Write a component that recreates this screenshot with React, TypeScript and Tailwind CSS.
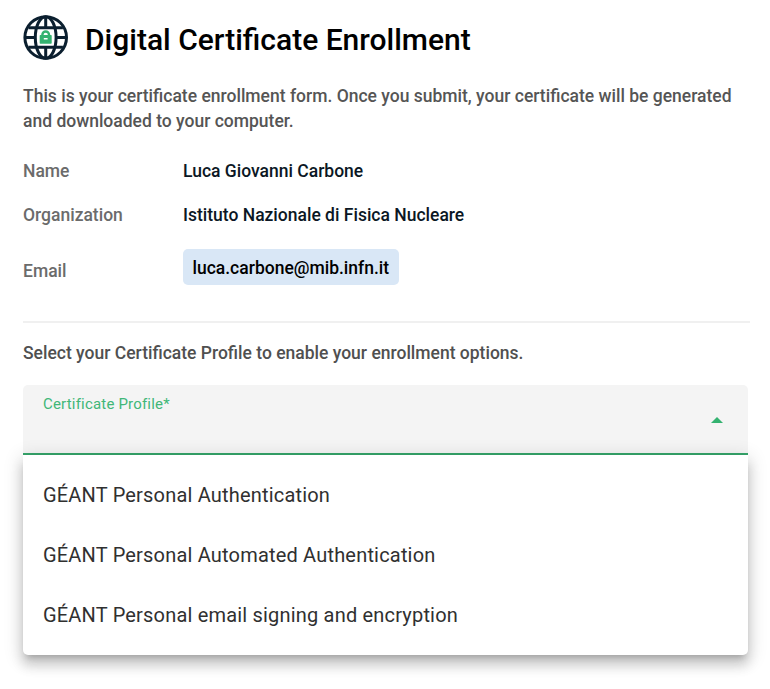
const details = [
  { label: 'Name', value: 'Luca Giovanni Carbone' },
  { label: 'Organization', value: 'Istituto Nazionale di Fisica Nucleare' },
];

const profiles = [
  'GÉANT Personal Authentication',
  'GÉANT Personal Automated Authentication',
  'GÉANT Personal email signing and encryption',
];

function GlobeLockIcon() {
  return (
    <svg viewBox="0 0 46 46" className="h-[46px] w-[46px] shrink-0" fill="none" aria-hidden="true">
      <g stroke="#0b1f2f" strokeWidth="3">
        <circle cx="22.7" cy="22.5" r="20.8" />
        <ellipse cx="22.7" cy="22.5" rx="10.4" ry="20.8" />
        <path d="M22.7 2v11M22.7 32v11M2 22.5h10.5M33 22.5h10.5M5.5 12.7h34.4M5.5 32.3h34.4" />
      </g>
      <path d="M19.4 21v-1.2a3.3 3.3 0 0 1 6.6 0V21" stroke="#34b270" strokeWidth="2.4" />
      <path
        d="M17.4 20h10.6q.7 0 .7.7v7.4q0 .7-.7.7H17.4q-.7 0-.7-.7v-7.4q0-.7.7-.7zM20.8 22.9v1.7h3.8v-1.7z"
        fill="#34b270"
        fillRule="evenodd"
      />
    </svg>
  );
}

export default function App() {
  return (
    <main className="h-[689px] overflow-hidden bg-white pt-[15px] pr-5 pl-[23px] font-['Roboto',sans-serif] text-[17.5px] leading-[25px] font-medium">
      <header className="flex h-[46px] items-center gap-4">
        <GlobeLockIcon />
        <h1 className="pt-1 text-[30px] leading-10 font-medium text-black">Digital Certificate Enrollment</h1>
      </header>

      <p className="mt-[23px] text-[#555555]">
        This is your certificate enrollment form. Once you submit, your certificate will be generated and downloaded to your computer.
      </p>

      <dl className="mt-[25px] flex flex-col gap-[19px]">
        {details.map(({ label, value }) => (
          <div key={label} className="flex">
            <dt className="w-40 text-[#6b6b6b]">{label}</dt>
            <dd className="text-[#0b1724]">{value}</dd>
          </div>
        ))}
        <div className="mt-0.5 flex">
          <dt className="w-40 pt-2.5 text-[#6b6b6b]">Email</dt>
          <dd className="flex h-9 items-center rounded-[5px] bg-[#d9e7f6] px-[9.5px] pt-0.5 text-black">luca.carbone@mib.infn.it</dd>
        </div>
      </dl>

      <hr className="mt-9 border-t-2 border-[#f0f0f0]" />

      <p className="mt-[18px] text-[#505050]">Select your Certificate Profile to enable your enrollment options.</p>

      <div className="mt-[19px] w-[725px] font-normal">
        <button className="flex h-[70px] w-full items-start justify-between rounded-t-[5px] border-b-2 border-[#36a56b] bg-[#f4f4f4] pr-[25px] pl-5">
          <span className="pt-[7px] text-[15px] tracking-[0.1875px] text-[#40b778]">Certificate Profile*</span>
          <svg viewBox="0 0 12 6" className="mt-8 h-1.5 w-3" fill="#34b270" aria-hidden="true">
            <path d="M0 6 6 0l6 6z" />
          </svg>
        </button>
        <ul className="relative rounded-b-[5px] bg-white py-2.5 shadow-[0_6px_6px_-4px_rgba(0,0,0,0.2),0_10px_12px_1px_rgba(0,0,0,0.14),0_4px_18px_3px_rgba(0,0,0,0.12)]">
          {profiles.map((profile) => (
            <li key={profile} className="flex h-[60px] items-center px-5 text-xl font-normal tracking-[0.1875px] text-[#303030]">{profile}</li>
          ))}
        </ul>
      </div>
    </main>
  );
}
